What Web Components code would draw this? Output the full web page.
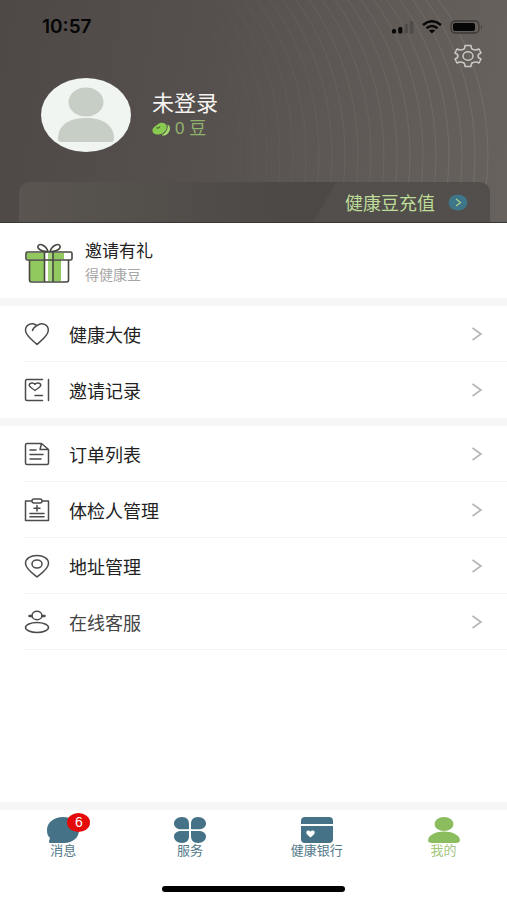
<!DOCTYPE html>
<html lang="zh-CN">
<head>
<meta charset="utf-8">
<meta name="viewport" content="width=device-width, initial-scale=1">
<title>我的</title>
<style>
body { margin: 0; background: #fff; font-family: "Liberation Sans", "Noto Sans CJK SC", sans-serif; }
</style>
</head>
<body>
<my-page></my-page>
<script>
const define = (name, html) => {
  const template = document.createElement('template');
  template.innerHTML = '<style>*{box-sizing:border-box}</style>' + html;
  customElements.define(name, class extends HTMLElement {
    constructor() {
      super();
      this.attachShadow({ mode: 'open' }).append(template.content.cloneNode(true));
    }
  });
};

const svg = (w, h, body, attrs = '') =>
  `<svg width="${w}" height="${h}" viewBox="0 0 ${w} ${h}" fill="none" aria-hidden="true" ${attrs}>${body}</svg>`;

const line = 'stroke="#4b4b4b" stroke-width="1.5" stroke-linecap="round" stroke-linejoin="round"';
const icons = {
  heart: svg(26, 24, '<path d="M8.500 8.500C9 6.600 10.600 4.800 13 3.600C18 -0.500 24.500 2.800 24.300 8.500C24.200 13.500 18 18 13 22.500C8 18 1.700 13.500 1.500 8.500C1.300 2.800 8 -0.500 13 3.600"/>', line),
  invite: svg(26, 24, '<path d="M18.500 1.500H3Q1.500 1.500 1.500 3V21Q1.500 22.500 3 22.500H18.500M24.500 1.500V22.500M11 17.500H18.500M11 12.500C8 10 5 9 5.200 6.900C5.500 4.500 9.500 4.300 11 6.300C12.500 4.300 16.500 4.500 16.800 6.900C17 9 14 10 11 12.500Z"/>', line),
  order: svg(26, 24, '<path d="M17.500 1.500H3Q1.500 1.500 1.500 3V21Q1.500 22.500 3 22.500H23Q24.500 22.500 24.500 21V7.500L17.500 1.500L16 7.500H24M6 8H12M6 12.500H19M6 17H17"/>', line),
  exam: svg(26, 24, '<path d="M8 3H1.500V22.500H24.500V3H18M10 1H16Q18 1 18 3Q18 5 16 5H10Q8 5 8 3Q8 1 10 1ZM13 7.500V13M10 10.300H16M6 15.500H20M6 18.800H20"/>', line),
  place: svg(26, 24, '<path d="M13 23C8.500 19.500 1.500 14.500 1.500 9.500C1.500 4.500 6.500 1.500 13 1.500S24.500 4.500 24.500 9.500C24.500 14.500 17.500 19.500 13 23Z"/><ellipse cx="13" cy="10" rx="5" ry="4"/>', line),
  service: svg(26, 24, '<ellipse cx="13" cy="5.500" rx="5" ry="4.300"/><ellipse cx="13" cy="17.500" rx="11.500" ry="5"/><path d="M5.500 6H7.500M18.500 6H20.500" stroke-width="2.500"/>', line)
};

for (const [name, markup] of Object.entries(icons)) {
  define('icon-' + name, `<style>:host{display:flex;flex:none}</style>${markup}`);
}

define('phone-status', `
<style>
:host { display: flex; align-items: center; justify-content: space-between; padding: 16px 24px 0 42px; color: #060606; }
time { font: 600 19px/22px Inter, sans-serif; }
div { display: flex; align-items: center; gap: 8px; }
</style>
<time>10:57</time>
<div>
${svg(22, 14, '<rect x="0" y="9" width="4" height="4.500" rx="1.500" fill="#080808"/><rect x="6.300" y="7" width="4" height="6.500" rx="1.500" fill="#080808"/><rect x="12.500" y="4" width="3.500" height="9.500" rx="1" fill="#504c49"/><rect x="18" y="1" width="3.500" height="12.500" rx="1" fill="#504c49"/>')}
${svg(20, 14, '<path d="M1 5Q10 -2.500 19 5M4.500 8.300Q10 3.800 15.500 8.300" stroke="#080808" stroke-width="2.500"/><path d="M6.800 10.500Q10 8.300 13.200 10.500L10 13.500Z" fill="#080808"/>')}
${svg(33, 14, '<rect x="1" y="1" width="28" height="12" rx="4" stroke="#3d3937" stroke-width="1.300"/><rect x="3" y="3" width="22" height="8" rx="2" fill="#060606"/><path d="M31 5Q33 7 31 9Z" fill="#3d3937"/>')}
</div>`);

define('profile-head', `
<style>
:host { display: block; position: relative; overflow: hidden; background: linear-gradient(100deg, #4e4946 0%, #55504d 40%, #625d59 80%, #67625d 100%); border-bottom: 1px solid #3c3836; }
.rings { position: absolute; inset: 0; width: 100%; height: 100%; }
.settings { display: flex; justify-content: flex-end; padding: 6px 25px 0 0; }
button { display: flex; padding: 0; border: 0; background: none; }
.user { display: flex; align-items: center; gap: 21px; padding: 10px 41px 30px; }
.user, .settings, phone-status, a { position: relative; }
.name { margin: 0; font-size: 22px; line-height: 28px; font-weight: 400; color: #f4f3f2; }
.beans { display: flex; align-items: center; gap: 4px; margin: 0; font-size: 17px; line-height: 22px; color: #91b26d; }
a { display: flex; align-items: center; justify-content: flex-end; gap: 13px; height: 40px; margin: 0 17px 0 19px; padding-right: 22px; border-radius: 10px 10px 0 0; overflow: hidden; font-size: 18px; color: #bddc98; text-decoration: none;
  background: linear-gradient(120deg, transparent 64%, #54504dcc 64.500%), linear-gradient(90deg, #5a5550, #4d4946 55%, #4b4745); }
</style>
<svg class="rings" viewBox="0 0 507 222" preserveAspectRatio="xMaxYMin slice" fill="none" stroke="#8b837b" aria-hidden="true"></svg>
<phone-status></phone-status>
<div class="settings"><button type="button" aria-label="设置">
${svg(28, 24, '<path d="M11 1.500H17Q17 5 19 5.500Q22 6.500 25 5L27 9Q24 10 24 12T27 15L25 19Q22 17.500 19 18.500Q17 19 17 22.500H11Q11 19 9 18.500Q6 17.500 3 19L1 15Q4 14 4 12T1 9L3 5Q6 6.500 9 5.500Q11 5 11 1.500Z"/><ellipse cx="14" cy="12" rx="5" ry="4.300"/>', 'stroke="#cbc8c5" stroke-width="1.500" stroke-linejoin="round"')}
</button></div>
<div class="user">
${svg(90, 74, '<ellipse cx="45" cy="37" rx="45" ry="37" fill="#f1f5f2"/><ellipse cx="45" cy="24" rx="17.500" ry="14.500" fill="#c7cec5"/><path d="M17 61C17 47 28 40 45 40S73 47 73 61Q73 64 70 64H20Q17 64 17 61Z" fill="#c7cec5"/>')}
<div><p class="name">未登录</p>
<p class="beans">${svg(19, 14, '<path d="M15.500 2.500C19 4 19 10 14 13Q11 14 9.500 13C14 11 16.500 7 15.500 2.500Z" fill="#a4dc6c"/><path d="M0.500 9C0 5.500 3.500 4.500 5.500 2.500C8 0 13 0 14.500 3.500C16 8 11 13 5.500 12.500C2.500 12.500 0.700 11 0.500 9Z" fill="#88cb50"/><path d="M4.500 5.500Q6.500 7 8 4.500" stroke="#4b6636" stroke-width="1.200"/>')}<span>0 豆</span></p></div>
</div>
<a href="#recharge"><span>健康豆充值</span>${svg(20, 17, '<ellipse cx="10" cy="8.500" rx="9.500" ry="8" fill="#3f7588"/><path d="M8 5L12.500 8.500L8 12" stroke="#a9cf8b" stroke-width="1.300"/>')}</a>`);

// Nested arcs across the header, brighter towards its right edge.
customElements.define('profile-header', class extends customElements.get('profile-head') {
  constructor() {
    super();
    let arcs = '';
    for (let i = 0; i < 20; i++) {
      const x = 243 + i * 13;
      arcs += `<path d="M${x - 68} -20C${x - 20} 30 ${x + 14} 120 ${x - 10} 222" stroke-opacity="${0.06 + i * 0.018}"/>`;
    }
    this.shadowRoot.querySelector('.rings').innerHTML = arcs;
  }
});

define('invite-card', `
<style>
:host { display: block; }
a { display: flex; align-items: center; gap: 12px; height: 75px; padding: 4px 25px 0; text-decoration: none; }
strong, span { display: block; }
strong { font-size: 17px; line-height: 24px; font-weight: 400; color: #222; }
span { font-size: 14px; line-height: 22px; color: #a6a6a6; }
</style>
<a href="#invite">
${svg(48, 40, '<path d="M5 17H36V38H5ZM2 10H39V16H2Z" fill="#91c95f"/><path d="M20 9H28V38H20Z" fill="#fff"/><path d="M23 10H28V38H23Z" fill="#a6d47c"/><g stroke="#45473f" stroke-width="1.600" stroke-linejoin="round"><rect x="1" y="9" width="46" height="8" rx="1.500"/><path d="M4.500 17V37Q4.500 39 6.500 39H41.500Q43.500 39 43.500 37V17M19.500 9V39M28 9V39"/><path d="M23 8.500C17 9 12 6 13 3C14.500 0 21 2 23 8.500ZM25 8.500C31 9 36 6 35 3C33.500 0 27 2 25 8.500Z" fill="#fff"/></g>')}
<div><strong><slot></slot></strong><span><slot name="note"></slot></span></div>
</a>`);

define('menu-group', `
<style>
:host { display: block; border-top: 8px solid #f6f6f6; }
</style>
<nav><slot></slot></nav>`);

define('menu-row', `
<style>
:host { display: block; padding-left: 24px; color: #222; }
:host([muted]) { color: #444; }
a { display: flex; align-items: center; gap: 19px; height: 56px; padding-right: 24px; border-bottom: 1px solid #f5f5f5; font-size: 18px; color: inherit; text-decoration: none; }
:host([plain]) a { border-bottom-color: transparent; }
span { flex: 1; }
</style>
<a href="#"><slot name="icon"></slot><span><slot></slot></span>
${svg(12, 14, '<path d="M1.500 1L10 7L1.500 13"/>', 'stroke="#b5b5b5" stroke-width="1.600"')}</a>`);

define('tab-item', `
<style>
:host { flex: 1; color: #52798a; }
:host([current]) { color: #a3c77d; }
a { display: flex; flex-direction: column; align-items: center; color: inherit; font-size: 13px; line-height: 16px; text-decoration: none; }
.icon { display: flex; position: relative; }
::slotted(svg) { display: block; }
::slotted(b) { position: absolute; top: -4px; right: -11px; width: 23px; height: 19px; border-radius: 50%; background: #e60b0b; color: #fff; font-size: 14px; line-height: 19px; font-weight: 400; text-align: center; }
</style>
<a href="#"><span class="icon"><slot name="icon"></slot><slot name="badge"></slot></span><span><slot></slot></span></a>`);

define('tab-bar', `
<style>
:host { display: block; margin-top: auto; border-top: 8px solid #f6f6f6; }
nav { display: flex; padding: 7px 0 27px; }
i { display: block; width: 36%; height: 6px; margin: 0 auto 8px; border-radius: 3px; background: #000; }
</style>
<nav><slot></slot></nav><i></i>`);

define('my-page', `
<style>:host { display: flex; flex-direction: column; min-height: 100vh; }</style>
<profile-header></profile-header>
<invite-card>邀请有礼<span slot="note">得健康豆</span></invite-card>
<menu-group>
<menu-row><icon-heart slot="icon"></icon-heart>健康大使</menu-row>
<menu-row plain><icon-invite slot="icon"></icon-invite>邀请记录</menu-row>
</menu-group>
<menu-group>
<menu-row><icon-order slot="icon"></icon-order>订单列表</menu-row>
<menu-row><icon-exam slot="icon"></icon-exam>体检人管理</menu-row>
<menu-row><icon-place slot="icon"></icon-place>地址管理</menu-row>
<menu-row muted><icon-service slot="icon"></icon-service>在线客服</menu-row>
</menu-group>
<tab-bar>
<tab-item>${svg(32, 26, '<path d="M3 26Q1.500 26 2 24L3 21C0.500 18.500 0 16.500 0 13C0 5.500 7 0 16 0S32 5.500 32 13S26 26 17 26Z" fill="#457287"/>', 'slot="icon"')}<b slot="badge">6</b>消息</tab-item>
<tab-item>${svg(32, 26, '<path d="M15 12.300H8C3 12.300 0 10 0 6.500C0 3 3 0 8 0S15 3 15 7ZM17 12.300H24C29 12.300 32 10 32 6.500C32 3 29 0 24 0S17 3 17 7ZM15 14H8C3 14 0 16 0 19.500C0 23 3 26 8 26S15 23 15 19ZM17 14H24C29 14 32 16 32 19.500C32 23 29 26 24 26S17 23 17 19Z" fill="#457287"/>', 'slot="icon"')}服务</tab-item>
<tab-item>${svg(32, 26, '<path d="M0 7V4Q0 0 4 0H28Q32 0 32 4V7ZM0 9H32V22Q32 26 28 26H4Q0 26 0 22Z" fill="#457287"/><path d="M9.500 20.500C7 18.500 5 17.300 5.300 15C5.800 13 8.500 13 9.500 14.700C10.500 13 13.200 13 13.700 15C14 17.300 12 18.500 9.500 20.500Z" fill="#fff"/>', 'slot="icon"')}健康银行</tab-item>
<tab-item current>${svg(32, 26, '<ellipse cx="16" cy="7" rx="9.500" ry="7" fill="#8bbd5f"/><path d="M0 23C1 17.500 8 14.500 16 14.500S31 17.500 32 23Q32 26 28 26H4Q0 26 0 23Z" fill="#8bbd5f"/>', 'slot="icon"')}我的</tab-item>
</tab-bar>`);
</script>
</body>
</html>
